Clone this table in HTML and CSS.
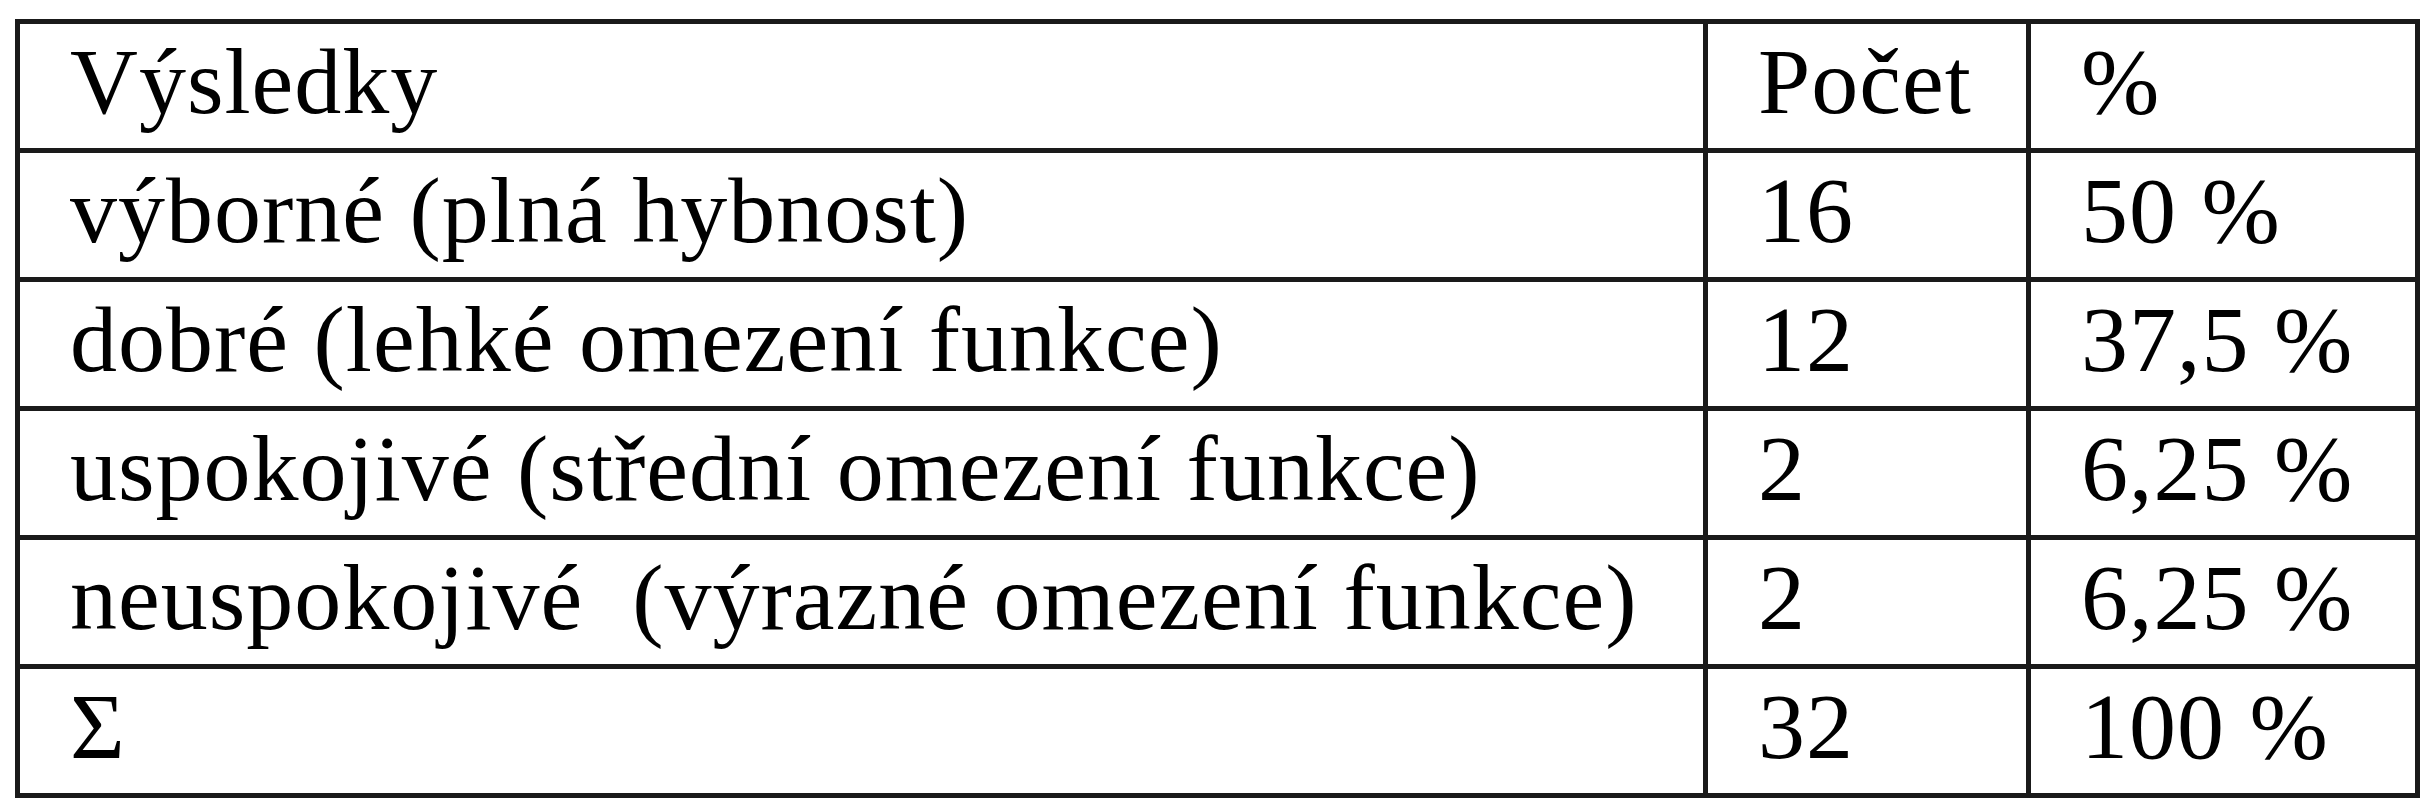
FILE: index.html
```html
<!DOCTYPE html>
<html lang="cs">
<head>
<meta charset="utf-8">
<title>Výsledky</title>
<link rel="stylesheet" href="styles.css">
</head>
<body>
<table class="results">
  <colgroup>
    <col class="c-label">
    <col class="c-count">
    <col class="c-pct">
  </colgroup>
  <tr class="row"><td>Výsledky</td><td>Počet</td><td>%</td></tr>
  <tr class="row"><td>výborné (plná hybnost)</td><td>16</td><td>50 %</td></tr>
  <tr class="row"><td>dobré (lehké omezení funkce)</td><td>12</td><td>37,5 %</td></tr>
  <tr class="row"><td>uspokojivé (střední omezení funkce)</td><td>2</td><td>6,25 %</td></tr>
  <tr class="row"><td>neuspokojivé &nbsp;(výrazné omezení funkce)</td><td>2</td><td>6,25 %</td></tr>
  <tr class="row"><td>Σ</td><td>32</td><td>100 %</td></tr>
</table>
</body>
</html>
```
FILE: styles.css
```css
html, body {
  margin: 0;
  padding: 0;
  background: #fff;
}
body {
  padding: 19px 0 0 15px;
}
.results {
  border-collapse: collapse;
  table-layout: fixed;
  width: 2400px;
  font-size: 94px;
  color: #000;
}
.row td { font-family: "Times New Roman"; }
.c-label { width: 1688px; }
.c-count { width: 323px; }
.c-pct { width: 389px; }
.results td {
  border: 5px solid #1a1a1a;
  height: 128px;
  padding: 0 0 10px 50px;
  line-height: 114px;
  letter-spacing: 1px;
  white-space: pre;
  box-sizing: border-box;
  vertical-align: top;
}
```
